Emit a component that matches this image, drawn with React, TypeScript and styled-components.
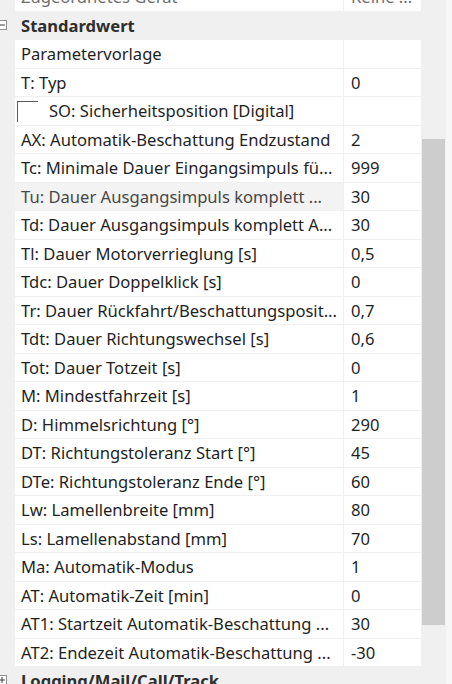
import React from "react";
import styled, { createGlobalStyle, css } from "styled-components";

const GlobalStyle = createGlobalStyle`
  html, body { margin: 0; padding: 0; background: #ffffff; overflow: hidden; }
  * { box-sizing: border-box; }
`;

const Window = styled.div`
  display: flex;
  width: 452px;
  height: 684px;
  overflow: hidden;
  background: #f0f0f0;
  font-family: "Noto Sans", "Open Sans", sans-serif;
  font-size: 16.6px;
  color: #1f1f1f;
`;

const Grid = styled.div`
  flex: 0 0 421px;
  height: 684px;
  overflow: hidden;
  background: #f0f0f0;
`;

const List = styled.div<{ $offset: number }>`
  display: flex;
  flex-direction: column;
  margin-top: ${(p) => -p.$offset}px;
`;

type Kind = "item" | "category" | "readonly" | "hover";

const Row = styled.div<{ $kind: Kind }>`
  display: grid;
  grid-template-columns: 15px 328px 1px 77px;
  height: 28.5px;
  flex: 0 0 28.5px;
  align-items: stretch;
  ${(p) =>
    p.$kind === "category" &&
    css`
      grid-template-columns: 15px 406px;
    `}
`;

const Margin = styled.div`
  display: flex;
  align-items: center;
  background: #f0f0f0;
  overflow: hidden;
`;

const NameCell = styled.div<{ $kind: Kind; $indent?: boolean }>`
  display: flex;
  align-items: center;
  gap: 11px;
  padding-left: ${(p) => (p.$indent ? 2 : 6)}px;
  border-bottom: 1px solid #f0f0f0;
  white-space: nowrap;
  overflow: hidden;
  background: ${(p) =>
    p.$kind === "hover" ? "#f3f3f3" : p.$kind === "category" ? "#f0f0f0" : "#ffffff"};
  color: ${(p) =>
    p.$kind === "readonly" ? "#6d6d6d" : p.$kind === "hover" ? "#474747" : "#1f1f1f"};
  font-weight: ${(p) => (p.$kind === "category" ? 700 : 400)};
  ${(p) =>
    p.$kind === "category" &&
    css`
      color: #2e2e2e;
    `}
`;

const Divider = styled.div`
  background: #f0f0f0;
`;

const ValueCell = styled.div<{ $kind: Kind }>`
  display: flex;
  align-items: center;
  padding-left: 7px;
  border-bottom: 1px solid #f0f0f0;
  white-space: nowrap;
  overflow: hidden;
  background: #ffffff;
  color: ${(p) => (p.$kind === "readonly" ? "#6d6d6d" : "#1f1f1f")};
`;

const Check = styled.span`
  flex: 0 0 21px;
  height: 21px;
  margin-top: 4px;
  align-self: flex-start;
  border-top: 1px solid #5a5a5a;
  border-left: 1px solid #5a5a5a;
`;

const Track = styled.div`
  flex: 0 0 25px;
  height: 684px;
  display: flex;
  flex-direction: column;
  padding-left: 1px;
  background: #f0f0f0;
`;

const Thumb = styled.div<{ $top: number; $height: number }>`
  margin-top: ${(p) => p.$top}px;
  height: ${(p) => p.$height}px;
  width: 23px;
  background: #cdcdcd;
`;

const Edge = styled.div`
  flex: 1 1 auto;
  height: 684px;
  background: #f7f7f7;
`;

const Expander = ({ open }: { open: boolean }) => (
  <svg width="8" height="10" viewBox="0 0 8 10" style={{ marginTop: -2 }}>
    <rect x="-2.5" y="0.5" width="9" height="9" fill="#ffffff" stroke="#8f8f8f" />
    <line x1="-1" y1="5" x2="5" y2="5" stroke="#3c3c3c" />
    {!open && <line x1="2" y1="2" x2="2" y2="8" stroke="#3c3c3c" />}
  </svg>
);

type Item = { name: string; value?: string; kind?: Kind; check?: boolean };

const items: Item[] = [
  { name: "Parametervorlage", value: "" },
  { name: "T: Typ", value: "0" },
  { name: "SO: Sicherheitsposition [Digital]", value: "", check: true },
  { name: "AX: Automatik-Beschattung Endzustand", value: "2" },
  { name: "Tc: Minimale Dauer Eingangsimpuls fü...", value: "999" },
  { name: "Tu: Dauer Ausgangsimpuls komplett ...", value: "30", kind: "hover" },
  { name: "Td: Dauer Ausgangsimpuls komplett A...", value: "30" },
  { name: "Tl: Dauer Motorverrieglung [s]", value: "0,5" },
  { name: "Tdc: Dauer Doppelklick [s]", value: "0" },
  { name: "Tr: Dauer Rückfahrt/Beschattungsposit...", value: "0,7" },
  { name: "Tdt: Dauer Richtungswechsel [s]", value: "0,6" },
  { name: "Tot: Dauer Totzeit [s]", value: "0" },
  { name: "M: Mindestfahrzeit [s]", value: "1" },
  { name: "D: Himmelsrichtung [°]", value: "290" },
  { name: "DT: Richtungstoleranz Start [°]", value: "45" },
  { name: "DTe: Richtungstoleranz Ende [°]", value: "60" },
  { name: "Lw: Lamellenbreite [mm]", value: "80" },
  { name: "Ls: Lamellenabstand [mm]", value: "70" },
  { name: "Ma: Automatik-Modus", value: "1" },
  { name: "AT: Automatik-Zeit [min]", value: "0" },
  { name: "AT1: Startzeit Automatik-Beschattung ...", value: "30" },
  { name: "AT2: Endezeit Automatik-Beschattung ...", value: "-30" },
];

const PropRow = ({ item }: { item: Item }) => {
  const kind: Kind = item.kind ?? "item";
  return (
    <Row $kind={kind}>
      <Margin />
      <NameCell $kind={kind} $indent={item.check}>
        {item.check && <Check />}
        {item.name}
      </NameCell>
      <Divider />
      <ValueCell $kind={kind}>{item.value}</ValueCell>
    </Row>
  );
};

const CategoryRow = ({ title, open }: { title: string; open: boolean }) => (
  <Row $kind="category">
    <Margin>
      <Expander open={open} />
    </Margin>
    <NameCell $kind="category">{title}</NameCell>
  </Row>
);

export default function App() {
  return (
    <>
      <GlobalStyle />
      <Window>
        <Grid>
          <List $offset={17}>
            <PropRow item={{ name: "Zugeordnetes Gerät", value: "Keine ...", kind: "readonly" }} />
            <CategoryRow title="Standardwert" open />
            {items.map((it) => (
              <PropRow key={it.name} item={it} />
            ))}
            <CategoryRow title="Logging/Mail/Call/Track" open={false} />
          </List>
        </Grid>
        <Track>
          <Thumb $top={139} $height={486} />
        </Track>
        <Edge />
      </Window>
    </>
  );
}
